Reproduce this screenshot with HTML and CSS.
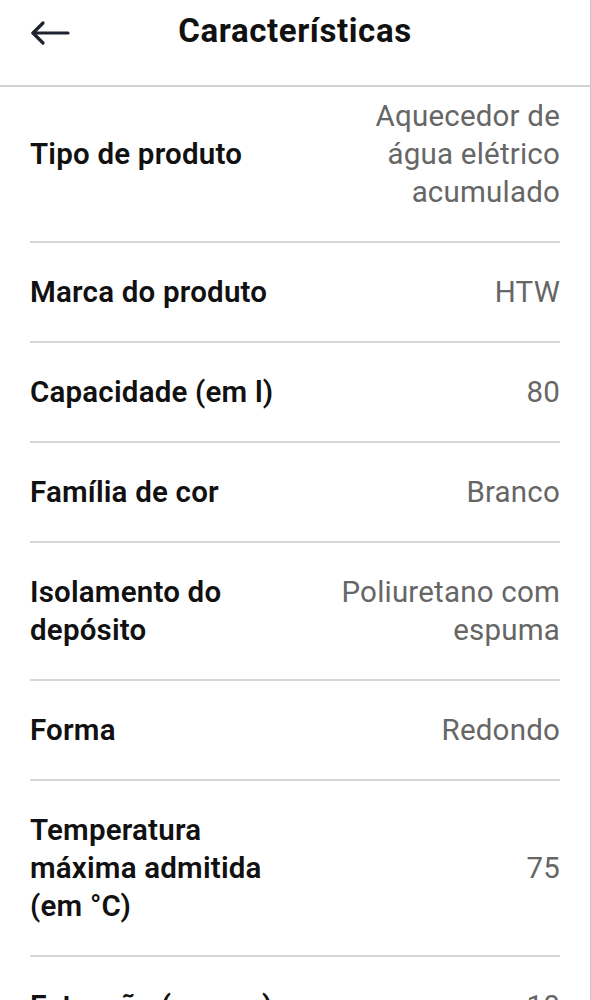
FILE: index.html
```html
<!DOCTYPE html>
<html lang="pt">
<head>
  <meta charset="UTF-8" />
  <meta name="viewport" content="width=device-width, initial-scale=1" />
  <title>Características</title>
  <link rel="stylesheet" href="styles.css">
</head>
<body>
  <div class="page">

    <!-- ====== CABEÇALHO ====== -->
    <header class="topbar">
      <button class="back-btn" aria-label="Voltar">
        <svg width="40" height="26" viewBox="0 0 40 26" fill="none" stroke="#1f2330" stroke-width="3.2" stroke-linecap="round" stroke-linejoin="round">
          <path d="M38 13H3"/>
          <path d="M13 3L3 13l10 10"/>
        </svg>
      </button>
      <h1 class="topbar-title">Características</h1>
    </header>

    <!-- ====== LISTA ====== -->
    <dl class="specs">
      <div class="spec-row first">
        <dt class="spec-label">Tipo de produto</dt>
        <dd class="spec-value">Aquecedor de água elétrico acumulado</dd>
      </div>
      <div class="spec-row">
        <dt class="spec-label">Marca do produto</dt>
        <dd class="spec-value">HTW</dd>
      </div>
      <div class="spec-row">
        <dt class="spec-label">Capacidade (em l)</dt>
        <dd class="spec-value">80</dd>
      </div>
      <div class="spec-row">
        <dt class="spec-label">Família de cor</dt>
        <dd class="spec-value">Branco</dd>
      </div>
      <div class="spec-row">
        <dt class="spec-label">Isolamento do depósito</dt>
        <dd class="spec-value">Poliuretano com espuma</dd>
      </div>
      <div class="spec-row">
        <dt class="spec-label">Forma</dt>
        <dd class="spec-value">Redondo</dd>
      </div>
      <div class="spec-row">
        <dt class="spec-label">Temperatura máxima admitida (em °C)</dt>
        <dd class="spec-value">75</dd>
      </div>
      <div class="spec-row">
        <dt class="spec-label">Extensão (em cm)</dt>
        <dd class="spec-value">10</dd>
      </div>
    </dl>

  </div>
</body>
</html>
```

FILE: styles.css
```css
/* Reset básico */
*{margin:0;padding:0;box-sizing:border-box}

body{
  background:#fff;
  font-family:Roboto,"Noto Sans",Arial,sans-serif;
  color:#111;
  overflow:hidden
}

.page{
  min-height:100vh;
  border-right:1px solid #c8c8c8
}

/* === Cabeçalho === */
.topbar{
  height:87px;
  display:flex;align-items:center;
  padding:0 0 20px 30px;
  border-bottom:2px solid #d2d2d2;
  position:relative
}
.back-btn{
  background:none;border:none;cursor:pointer;
  display:flex;align-items:center
}
.topbar-title{
  position:absolute;left:0;right:0;top:11px;
  text-align:center;pointer-events:none;
  font-size:33px;font-weight:700;letter-spacing:.6px;color:#111
}

/* === Lista de características === */
.specs{padding:0 30px}
.spec-row{
  display:flex;justify-content:space-between;align-items:center;gap:20px;
  padding:30px 0;
  border-bottom:2px solid #d6d6d6;
  font-size:29.5px;line-height:38px
}
.spec-row.first{padding-top:10px}   /* lista ligeiramente deslocada */
.spec-label{font-weight:600;color:#111;max-width:265px;letter-spacing:.2px}
.spec-value{color:#666;text-align:right;max-width:232px;letter-spacing:.2px}
```
